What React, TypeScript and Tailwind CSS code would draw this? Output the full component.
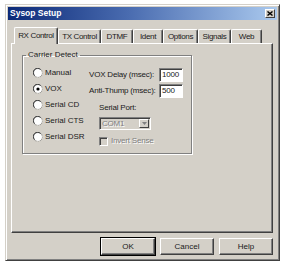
import React from "react";

const tabs = [
  { label: "RX Control", w: "w-[44px]", active: true },
  { label: "TX Control", w: "w-[43px]" },
  { label: "DTMF", w: "w-[32px]" },
  { label: "Ident", w: "w-[30px]" },
  { label: "Options", w: "w-[35px]" },
  { label: "Signals", w: "w-[33px]" },
  { label: "Web", w: "w-[31px]" },
];

const radios = ["Manual", "VOX", "Serial CD", "Serial CTS", "Serial DSR"];

function Radio({ checked }: { checked?: boolean }) {
  return (
    <svg width="10" height="10" viewBox="0 0 10 10" className="shrink-0">
      <circle cx="5" cy="5" r="4.5" fill="#fff" stroke="#808080" />
      <path d="M1.5 7.5 A4 4 0 0 1 7.5 1.5" fill="none" stroke="#404040" />
      <path d="M2.5 8.5 A4 4 0 0 0 8.5 2.5" fill="none" stroke="#d4d0c8" />
      {checked && <circle cx="5" cy="5" r="1.6" fill="#000" />}
    </svg>
  );
}

function Button({ label, def }: { label: string; def?: boolean }) {
  return (
    <div
      className={
        "w-[54px] h-[17px] flex items-center justify-center bg-[#d4d0c8] border-l border-t border-l-white border-t-white border-r border-b border-r-[#404040] border-b-[#404040] shadow-[inset_-1px_-1px_0_#808080] " +
        (def ? "outline outline-1 outline-black" : "")
      }
    >
      <span className="leading-none">{label}</span>
    </div>
  );
}

export default function App() {
  return (
    <div
      className="w-[283px] h-[265px] bg-white pt-[4px] pl-[5px] text-[8px] text-[#1a1a1a] whitespace-nowrap"
      style={{ fontFamily: '"Liberation Sans", Arial, sans-serif' }}
    >
      <div className="w-[275px] h-[257px] bg-[#d4d0c8] border border-t-[#d4d0c8] border-l-[#d4d0c8] border-r-[#404040] border-b-[#404040] shadow-[inset_1px_1px_0_#fff,inset_-1px_-1px_0_#808080] p-[1px] flex flex-col">
        {/* title bar */}
        <div className="h-[13px] mt-[1px] mx-[1px] flex items-center justify-between bg-[#4a6cb0] bg-[image:linear-gradient(90deg,#0c2a78,#4a6cb0_45%,#aac9ee)] pl-[2px] pr-[2px]">
          <span className="text-white font-bold text-[8.5px] leading-none">Sysop Setup</span>
          <div className="w-[10px] h-[9px] bg-[#d4d0c8] border-l border-t border-l-white border-t-white border-r border-b border-r-[#404040] border-b-[#404040] flex items-center justify-center">
            <svg width="6" height="5" viewBox="0 0 6 5">
              <path d="M0.5 0.5 L5.5 4.5 M5.5 0.5 L0.5 4.5" stroke="#000" strokeWidth="1.4" />
            </svg>
          </div>
        </div>

        {/* tabs */}
        <div className="ml-[7px] mt-[6px] h-[17px] flex items-end tracking-[-0.35px]">
          {tabs.map((t) => (
            <div
              key={t.label}
              className={
                t.w +
                " flex items-center justify-center bg-[#d4d0c8] border-l border-t border-l-white border-t-white border-r border-r-[#404040] rounded-t-[2px] shadow-[inset_-1px_0_0_#808080] " +
                (t.active ? "h-[17px] relative z-10 -mb-[1px] pb-[1px]" : "h-[14px]")
              }
            >
              <span className="leading-none">{t.label}</span>
            </div>
          ))}
        </div>

        {/* panel */}
        <div className="ml-[4px] w-[262px] h-[190px] border-l border-t border-l-white border-t-white border-r border-b border-r-[#404040] border-b-[#404040] shadow-[inset_-1px_-1px_0_#808080]">
          <fieldset className="ml-[10px] mt-[6px] w-[170px] h-[104px] border border-[#808080] shadow-[inset_1px_1px_0_#fff,1px_1px_0_#fff] px-0">
            <legend className="ml-[3px] px-[2px] leading-[10px]">Carrier Detect</legend>
            <div className="flex mt-[5px]">
              <div className="ml-[10px] w-[56px] flex flex-col">
                {radios.map((r, i) => (
                  <div key={r} className="h-[16px] flex items-center gap-[2px]">
                    <Radio checked={i === 1} />
                    <span className="leading-none">{r}</span>
                  </div>
                ))}
              </div>
              <div className="flex flex-col pt-[3px] tracking-[-0.2px]">
                <div className="flex items-center h-[14px]">
                  <span className="w-[70px] leading-none">VOX Delay (msec):</span>
                  <div className="w-[24px] h-[14px] bg-white border-l border-t border-l-[#808080] border-t-[#808080] border-r border-b border-r-white border-b-white shadow-[inset_1px_1px_0_#404040] pl-[2px] flex items-center">
                    1000
                  </div>
                </div>
                <div className="flex items-center h-[14px] mt-[2px]">
                  <span className="w-[70px] leading-none">Anti-Thump (msec):</span>
                  <div className="w-[24px] h-[14px] bg-white border-l border-t border-l-[#808080] border-t-[#808080] border-r border-b border-r-white border-b-white shadow-[inset_1px_1px_0_#404040] pl-[2px] flex items-center">
                    500
                  </div>
                </div>
                <div className="ml-[10px] mt-[5px] leading-[10px]">Serial Port:</div>
                <div className="ml-[10px] mt-[4px] w-[52px] h-[13px] bg-[#d4d0c8] border-l border-t border-l-[#808080] border-t-[#808080] border-r border-b border-r-white border-b-white shadow-[inset_1px_1px_0_#404040] flex items-center justify-between pl-[2px] pr-[1px]">
                  <span className="text-[#808080] [text-shadow:1px_1px_0_#fff] leading-none">COM1</span>
                  <div className="w-[10px] h-[9px] bg-[#d4d0c8] border-l border-t border-l-white border-t-white border-r border-b border-r-[#404040] border-b-[#404040] flex items-center justify-center">
                    <svg width="5" height="3" viewBox="0 0 5 3">
                      <path d="M0 0 H5 L2.5 3 Z" fill="#808080" />
                    </svg>
                  </div>
                </div>
                <div className="ml-[10px] mt-[6px] flex items-center gap-[3px] h-[10px]">
                  <div className="w-[9px] h-[9px] bg-[#d4d0c8] border-l border-t border-l-[#808080] border-t-[#808080] border-r border-b border-r-white border-b-white shadow-[inset_1px_1px_0_#404040]" />
                  <span className="text-[#808080] [text-shadow:1px_1px_0_#fff] leading-none">Invert Sense</span>
                </div>
              </div>
            </div>
          </fieldset>
        </div>

        {/* buttons */}
        <div className="mt-[5px] ml-[94px] flex gap-[5px]">
          <Button label="OK" def />
          <Button label="Cancel" />
          <Button label="Help" />
        </div>
      </div>
    </div>
  );
}
